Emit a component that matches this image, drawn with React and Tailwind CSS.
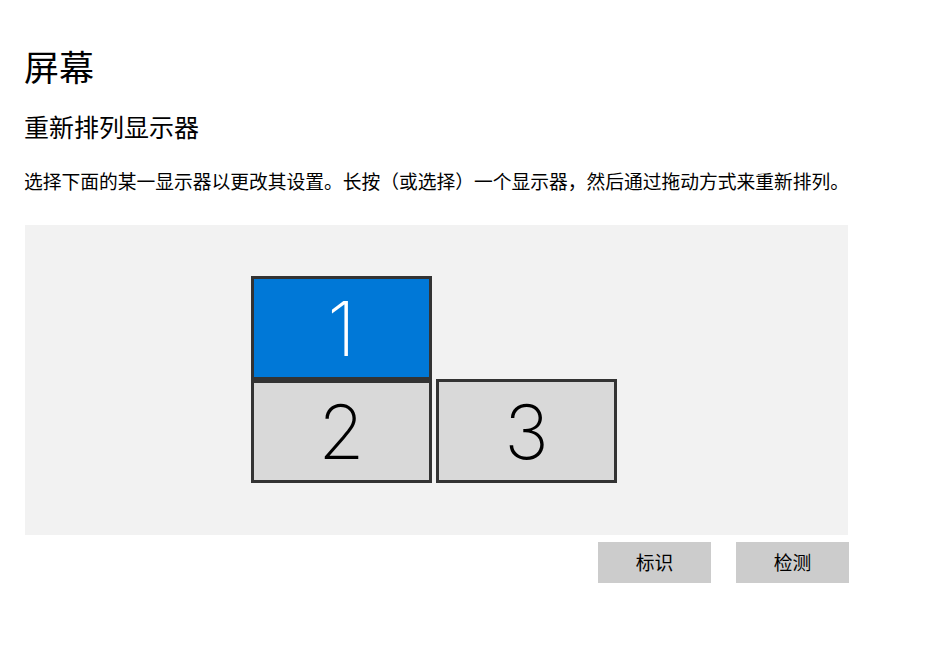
import React from "react";

const cjk = { fontFamily: '"Noto Sans CJK SC", sans-serif' };

function Monitor({ n, selected, className }) {
  return (
    <div
      className={`absolute flex items-center justify-center border-[3px] border-[#333333] ${
        selected ? "bg-[#0078d7] text-white" : "bg-[#d9d9d9] text-black"
      } ${className}`}
    >
      <span
        className="text-[75px] font-extralight leading-none"
        style={{ fontFamily: 'Inter, "Open Sans", sans-serif' }}
      >
        {n}
      </span>
    </div>
  );
}

export default function App() {
  return (
    <div className="w-[936px] h-[645px] bg-white text-black" style={cjk}>
      <div className="pl-[24px] pt-[43px]">
        <h1 className="text-[35px] leading-[46px] font-normal">屏幕</h1>
        <h2 className="mt-[20px] text-[25px] leading-[34px] font-normal">重新排列显示器</h2>
        <p className="mt-[25px] text-[18.75px] leading-[26px]">
          选择下面的某一显示器以更改其设置。长按（或选择）一个显示器，然后通过拖动方式来重新排列。
        </p>
        <div className="relative mt-[31px] ml-[1px] w-[823px] h-[310px] bg-[#f2f2f2]">
          <Monitor n="1" selected className="left-[226px] top-[51px] w-[181px] h-[104px]" />
          <Monitor n="2" className="left-[226px] top-[155px] w-[181px] h-[103px]" />
          <Monitor n="3" className="left-[411px] top-[154px] w-[181px] h-[104px]" />
        </div>
        <div className="w-[825px] flex justify-end gap-[25px] mt-[7px]">
          <button className="w-[113px] h-[41px] bg-[#cccccc] text-[18.75px] text-black">标识</button>
          <button className="w-[113px] h-[41px] bg-[#cccccc] text-[18.75px] text-black">检测</button>
        </div>
      </div>
    </div>
  );
}
